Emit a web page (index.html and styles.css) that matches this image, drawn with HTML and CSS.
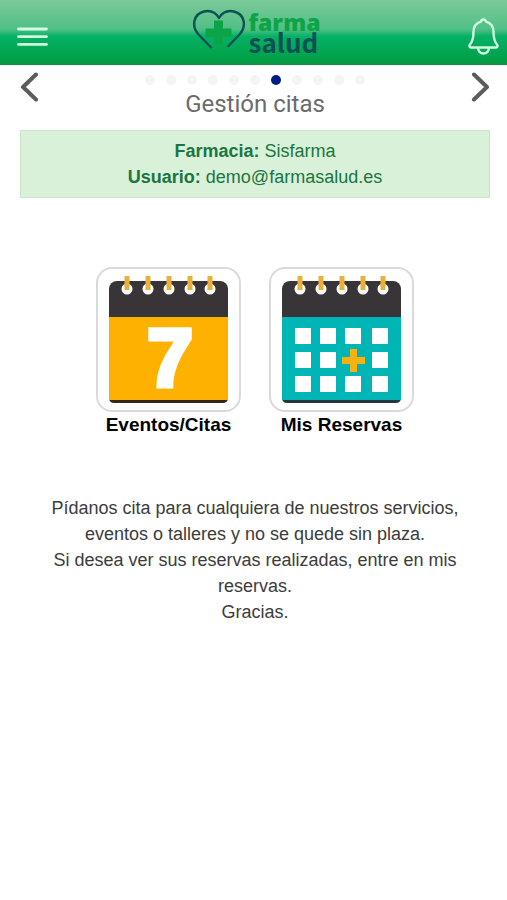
FILE: index.html
```
<!DOCTYPE html>
<html lang="es">
  <head>
    <meta charset="UTF-8" />
    <meta name="viewport" content="width=device-width, initial-scale=1.0" />
    <title>Gestión citas</title>
    <link rel="stylesheet" href="styles.css">
  </head>
  <body>
    <header class="topbar">
      <button type="button" class="icon-btn" aria-label="Menú">
        <svg width="31" height="20" viewBox="0 0 31 20">
          <path d="M1.5 2h28M1.5 9.7h28M1.5 17.4h28" stroke="#d2fae2" stroke-width="2.8" stroke-linecap="round" />
        </svg>
      </button>
      <a class="logo" href="#" aria-label="farma salud">
        <svg width="54" height="46" viewBox="0 0 54 46">
          <path d="M20 39.5L6.5 25.5C-1 17 1.5 5 12 2.5C18.5 1 24 4 27 9C30 4 35.5 1 42 2.5C52.5 5 55 17 47.5 25.5L36.5 37" fill="none" stroke="#0c5055" stroke-width="2.4" stroke-linecap="round" stroke-linejoin="round" />
          <path d="M20 39.5L26.5 43L33.5 39" fill="none" stroke="#0ba447" stroke-width="2.4" stroke-linecap="round" />
          <path d="M22 11.5h9v8h8.5v8.500H31v8h-9v-8h-8.500v-8.500H22z" fill="#0ba447" />
        </svg>
        <span class="logo-text">
          <span class="logo-farma">farma</span>
          <span class="logo-salud">salud</span>
        </span>
      </a>
      <button type="button" class="icon-btn" aria-label="Notificaciones">
        <svg width="31" height="37" viewBox="0 0 31 37">
          <path d="M15.5 1.5C17 1.5 17.8 2.5 18 3.6C23 5 25.5 9 25.5 14C25.5 20 26 23 29 26.5C30 28 29.5 29.5 28 29.5H3C1.5 29.5 1 28 2 26.5C5 23 5.5 20 5.5 14C5.5 9 8 5 13 3.6C13.2 2.5 14 1.5 15.5 1.5Z" fill="none" stroke="#d2fae2" stroke-width="2.4" stroke-linejoin="round" />
          <path d="M10 30C10.5 33.5 12.5 35.5 15.5 35.5S20.5 33.5 21 30" fill="none" stroke="#d2fae2" stroke-width="2.4" />
        </svg>
      </button>
    </header>

    <main class="page">
      <nav class="carousel">
        <button type="button" class="icon-btn" aria-label="Anterior">
          <svg width="19" height="30" viewBox="0 0 19 30">
            <path d="M16 2.5L3 15L16 27.5" fill="none" stroke="#5c5c5e" stroke-width="4" stroke-linecap="round" stroke-linejoin="round" />
          </svg>
        </button>
        <div class="carousel-center">
          <div class="dots">
            <span class="dot"></span>
            <span class="dot"></span>
            <span class="dot"></span>
            <span class="dot"></span>
            <span class="dot"></span>
            <span class="dot"></span>
            <span class="dot active"></span>
            <span class="dot"></span>
            <span class="dot"></span>
            <span class="dot"></span>
            <span class="dot"></span>
          </div>
          <h1 class="title">Gestión citas</h1>
        </div>
        <button type="button" class="icon-btn" aria-label="Siguiente">
          <svg width="19" height="30" viewBox="0 0 19 30">
            <path d="M3 2.5L16 15L3 27.5" fill="none" stroke="#5c5c5e" stroke-width="4" stroke-linecap="round" stroke-linejoin="round" />
          </svg>
        </button>
      </nav>

      <div class="alert">
        <div><strong>Farmacia:</strong> Sisfarma</div>
        <div><strong>Usuario:</strong> demo@farmasalud.es</div>
      </div>

      <div class="options">
        <a class="option" href="#">
          <svg class="card" viewBox="0 0 145 145">
            <rect x="1" y="1" width="143" height="143" rx="15" fill="#fff" stroke="#dadada" stroke-width="2" />
            <path d="M13 50V22a8 8 0 0 1 8-8h103a8 8 0 0 1 8 8v28z" fill="#383437" />
            <path d="M13 130h119v2q-1 4-5 4H18q-4 0-5-4z" fill="#33271a" />
            <path d="M13 50h119v83H13z" fill="#ffb100" />
            <g fill="#fff">
              <circle cx="31" cy="22" r="5.5" />
              <circle cx="52" cy="22" r="5.5" />
              <circle cx="73" cy="22" r="5.5" />
              <circle cx="94" cy="22" r="5.5" />
              <circle cx="114" cy="22" r="5.5" />
            </g>
            <path d="M31 9v14M52 9v14M73 9v14M94 9v14M114 9v14" stroke="#e9b03a" stroke-width="5" />
            <text class="day" x="74" y="119" text-anchor="middle">7</text>
          </svg>
          <span>Eventos/Citas</span>
        </a>
        <a class="option" href="#">
          <svg class="card" viewBox="0 0 145 145">
            <rect x="1" y="1" width="143" height="143" rx="15" fill="#fff" stroke="#dadada" stroke-width="2" />
            <path d="M13 50V22a8 8 0 0 1 8-8h103a8 8 0 0 1 8 8v28z" fill="#383437" />
            <path d="M13 130h119v2q-1 4-5 4H18q-4 0-5-4z" fill="#25373c" />
            <path d="M13 50h119v83H13z" fill="#00b5b5" />
            <g fill="#fff">
              <circle cx="31" cy="22" r="5.5" />
              <circle cx="52" cy="22" r="5.5" />
              <circle cx="73" cy="22" r="5.5" />
              <circle cx="94" cy="22" r="5.5" />
              <circle cx="114" cy="22" r="5.5" />
            </g>
            <path d="M31 9v14M52 9v14M73 9v14M94 9v14M114 9v14" stroke="#e9b03a" stroke-width="5" />
            <path d="M26 61h16v16H26zM51 61h16v16H51zM76 61h16v16H76zM103 61h16v16h-16zM26 85h16v16H26zM51 85h16v16H51zM103 85h16v16h-16zM26 109h16v16H26zM51 109h16v16H51zM76 109h16v16H76zM103 109h16v16h-16z" fill="#fff" />
            <path d="M84.5 82v23M73 93.5h23" stroke="#f5b212" stroke-width="7" />
          </svg>
          <span>Mis Reservas</span>
        </a>
      </div>

      <p class="info">
        Pídanos cita para cualquiera de nuestros servicios, eventos o talleres y no se quede sin plaza.<br>
        Si desea ver sus reservas realizadas, entre en mis reservas.<br>
        Gracias.
      </p>
    </main>
  </body>
</html>
```

FILE: styles.css
```
* {
  box-sizing: border-box;
}
body {
  margin: 0;
  background-color: #fff;
  color: #3c3c3c;
  font-family: "Liberation Sans", Arial, sans-serif;
  font-size: 18px;
  line-height: 26px;
}
svg {
  display: block;
}
.icon-btn {
  padding: 0;
  border: none;
  background-color: transparent;
  cursor: pointer;
}

/* header */
.topbar {
  display: flex;
  justify-content: space-between;
  align-items: flex-end;
  height: 65px;
  padding: 0 8px 10px 17px;
  background: linear-gradient(#7bca98 0%, #50bf86 45%, #03b165 56%, #009f44 95%, #1c8a45 100%);
}
.topbar .icon-btn:first-child {
  margin-bottom: 8px;
}
.logo {
  display: flex;
  align-items: center;
  gap: 3px;
  margin-right: 4px;
  text-decoration: none;
}
.logo-text {
  display: flex;
  flex-direction: column;
}
.logo-farma {
  color: #0ba447;
  font-family: "Open Sans", sans-serif;
  font-size: 23px;
  font-weight: 800;
  line-height: 20px;
}
.logo-salud {
  color: #0c5055;
  font-family: "Noto Sans CJK SC", sans-serif;
  font-size: 26px;
  font-weight: 700;
  line-height: 20px;
}

.page {
  padding: 7px 17px 0 20px;
}

/* carousel */
.carousel {
  display: flex;
  justify-content: space-between;
  align-items: flex-start;
}
.carousel-center {
  padding-top: 3px;
}
.dots {
  display: flex;
  justify-content: center;
  gap: 11px;
}
.dot {
  width: 10px;
  height: 10px;
  border-radius: 50%;
  background-color: #f4f3f5;
}
.dot.active {
  background-color: #001f85;
}
.title {
  margin: 5px 0 0;
  color: #6b6b6d;
  font-family: Roboto, sans-serif;
  font-size: 24px;
  font-weight: 400;
  line-height: 28px;
  text-align: center;
}

.alert {
  margin-top: 12px;
  padding: 7px 16px;
  border: 1px solid #c9e6ca;
  background-color: #d9f1d9;
  color: #1b7540;
  text-align: center;
}

.options {
  display: flex;
  justify-content: center;
  gap: 28px;
  margin-top: 69px;
}
.option {
  display: flex;
  flex-direction: column;
  align-items: center;
  color: #000;
  font-size: 19px;
  font-weight: 700;
  text-decoration: none;
}
.card {
  width: 145px;
}
.day {
  fill: #fff;
  stroke: #fff;
  stroke-width: 5px;
  font-size: 82px;
  font-weight: 700;
}

.info {
  margin: 57px 0 0;
  padding: 0 24px;
  text-align: center;
}
```
